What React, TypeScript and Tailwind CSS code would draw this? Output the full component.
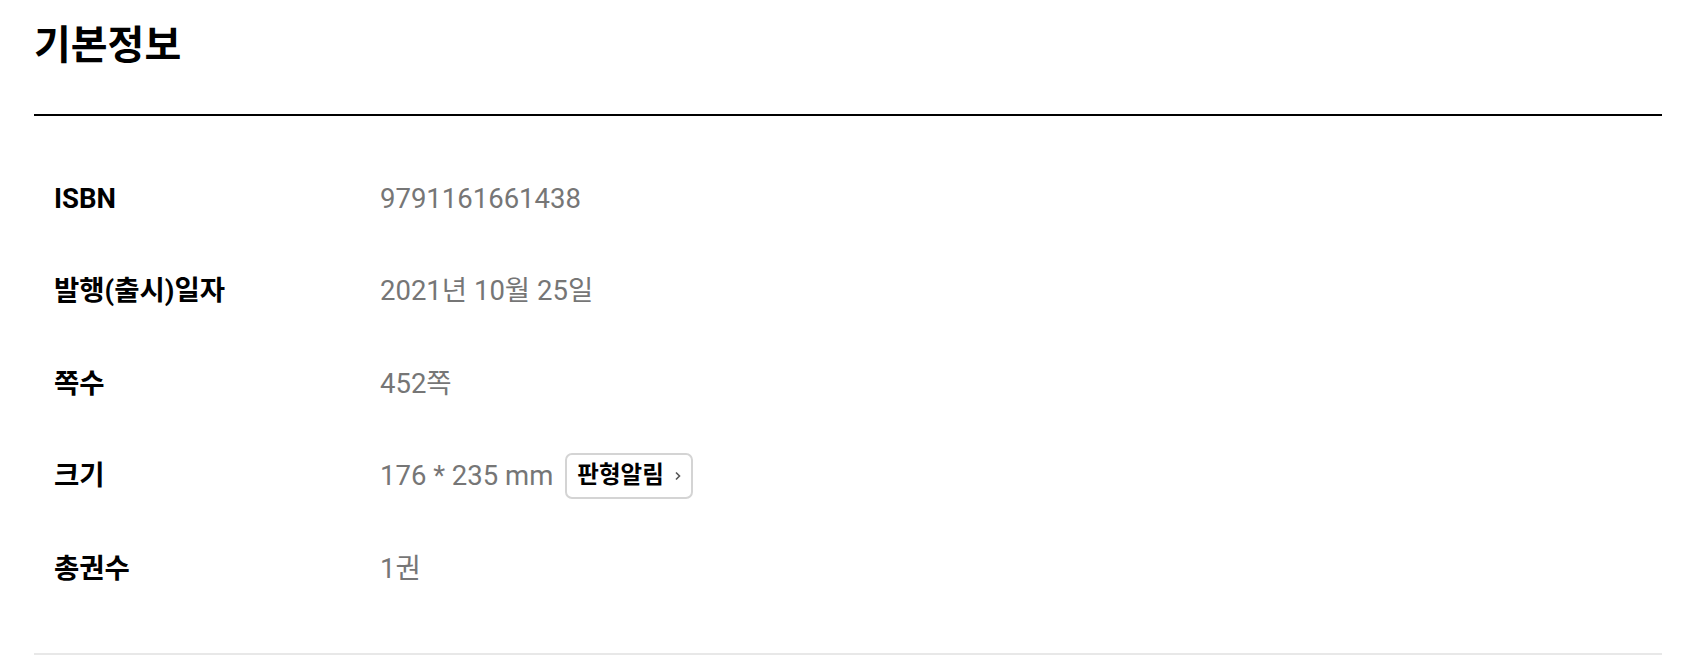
const rows: { label: string; value: string; badge?: boolean }[] = [
  { label: 'ISBN', value: '9791161661438' },
  { label: '발행(출시)일자', value: '2021년 10월 25일' },
  { label: '쪽수', value: '452쪽' },
  { label: '크기', value: '176 * 235 mm', badge: true },
  { label: '총권수', value: '1권' },
]

export default function App() {
  return (
    <div
      className="w-[1694px] h-[656px] bg-white overflow-hidden"
      style={{ fontFamily: 'Roboto, "Noto Sans CJK KR", sans-serif' }}
    >
      <div className="ml-[34px] w-[1628px]">
        {/* Title */}
        <div className="h-[114px] pt-[26px]">
          <h2 className="text-[40px] leading-none font-bold text-black">기본정보</h2>
        </div>
        <div className="h-[2px] bg-black" />

        {/* Rows */}
        <div className="pt-[36px] pb-[38px]">
          {rows.map((row) => (
            <div key={row.label} className="flex items-center h-[92.5px] pl-[20px]">
              <div className="w-[326px] text-[27.5px] font-bold text-black">{row.label}</div>
              <div className="flex items-center gap-[12px]">
                <span className="text-[27.5px] text-[#767676]">{row.value}</span>
                {row.badge && (
                  <button className="flex items-center h-[46px] pl-[10px] pr-[7px] border-2 border-[#d4d4d4] rounded-[7px] bg-white">
                    <span className="text-[23.5px] font-bold text-black leading-none">판형알림</span>
                    <svg width="12" height="14" viewBox="0 0 12 14" className="ml-[8px]">
                      <path d="M4 3.5 L7.5 7 L4 10.5" fill="none" stroke="#555" strokeWidth="1.6" />
                    </svg>
                  </button>
                )}
              </div>
            </div>
          ))}
        </div>
        <div className="h-[2px] bg-[#e8e8e8]" />
      </div>
    </div>
  )
}
